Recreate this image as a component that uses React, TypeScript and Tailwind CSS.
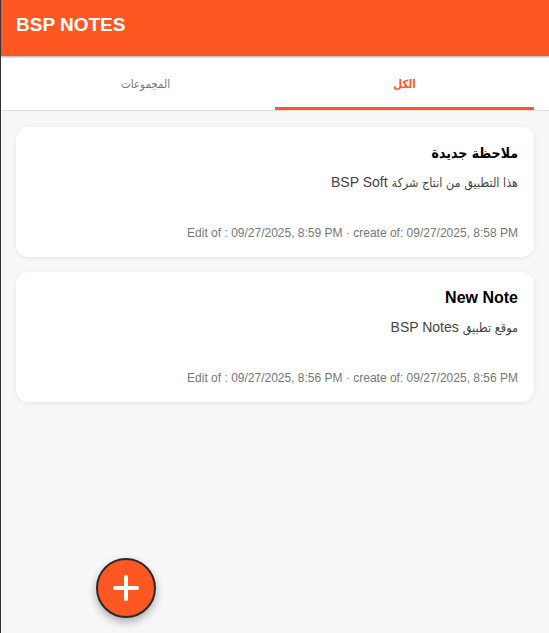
import { type FC, type ReactNode } from "react";

type Note = {
  title: ReactNode;
  body: ReactNode;
  edited: string;
  created: string;
};

const Ar: FC<{ children: ReactNode; className?: string }> = ({ children, className }) => (
  <span className={className} style={{ fontFamily: '"DejaVu Sans Condensed", "DejaVu Sans", sans-serif' }}>
    {children}
  </span>
);

const notes: Note[] = [
  {
    title: <Ar className="text-[14px]">ملاحظة جديدة</Ar>,
    body: (
      <>
        <Ar className="text-[12.5px]">هذا التطبيق من انتاج شركة</Ar> BSP Soft
      </>
    ),
    edited: "09/27/2025, 8:59 PM",
    created: "09/27/2025, 8:58 PM",
  },
  {
    title: "New Note",
    body: (
      <>
        <Ar className="text-[12.5px]">موقع تطبيق</Ar> BSP Notes
      </>
    ),
    edited: "09/27/2025, 8:56 PM",
    created: "09/27/2025, 8:56 PM",
  },
];

const font = { fontFamily: '"Liberation Sans", "DejaVu Sans", Arial, sans-serif' };

const NoteCard: FC<{ note: Note }> = ({ note }) => (
  <div dir="rtl" className="bg-white rounded-xl shadow-[0_1px_4px_rgba(0,0,0,0.08)] h-[130px] px-4 pt-[16px] flex flex-col">
    <h3 className="text-[16px] font-bold text-black leading-[20px]">{note.title}</h3>
    <p className="text-[14px] text-[#444] leading-[18px] mt-[10px]">{note.body}</p>
    <p dir="ltr" className="text-[12px] text-[#777] leading-[16px] mt-auto mb-[16px] text-right">
      Edit of : {note.edited} · create of: {note.created}
    </p>
  </div>
);

export default function App() {
  return (
    <div style={font} className="relative min-h-[633px] h-[633px] bg-[#f7f7f7] border-l border-[#333] overflow-hidden">
      <header className="h-[56px] bg-[#ff5722] flex items-center px-[15px] shadow-[0_1px_2px_rgba(0,0,0,0.35)] relative z-10">
        <h1 className="text-white font-bold text-[19px] leading-none -mt-[8px]">BSP NOTES</h1>
      </header>

      <nav className="bg-white border-b border-[#ddd] pl-[15px] pr-[15px]">
        <div dir="rtl" className="flex h-[54px]">
          <button className="flex-1 flex items-center justify-center pt-[6px] text-[#ff5722] border-b-[3px] border-[#ff5722]">
            <Ar className="text-[11.5px] font-bold">الكل</Ar>
          </button>
          <button className="flex-1 flex items-center justify-center pt-[6px] text-[#777] border-b-[3px] border-transparent">
            <Ar className="text-[11.5px]">المجموعات</Ar>
          </button>
        </div>
      </nav>

      <main className="flex flex-col gap-[15px] pl-[15px] pr-[15px] pt-[16px]">
        {notes.map((n, i) => (
          <NoteCard key={i} note={n} />
        ))}
      </main>

      <button className="absolute left-[95px] top-[558px] w-[60px] h-[60px] rounded-full bg-[#ff5722] border-2 border-[#2a2a2a] shadow-[0_4px_8px_rgba(0,0,0,0.3)] flex items-center justify-center">
        <svg width="26" height="26" viewBox="0 0 26 26">
          <path d="M13 2v22M2 13h22" stroke="white" strokeWidth="4" strokeLinecap="round" />
        </svg>
      </button>
    </div>
  );
}
